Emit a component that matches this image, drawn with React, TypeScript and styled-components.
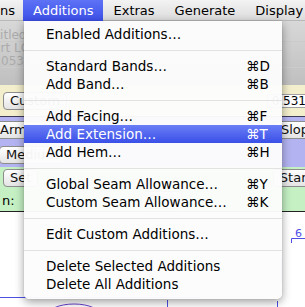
import styled, { createGlobalStyle } from 'styled-components';

type MenuEntry = { label: string; key?: string; active?: boolean } | 'sep';

const MENU_ITEMS: MenuEntry[] = [
  { label: 'Enabled Additions…' },
  'sep',
  { label: 'Standard Bands…', key: '⌘D' },
  { label: 'Add Band…', key: '⌘B' },
  'sep',
  { label: 'Add Facing…', key: '⌘F' },
  { label: 'Add Extension…', key: '⌘T', active: true },
  { label: 'Add Hem…', key: '⌘H' },
  'sep',
  { label: 'Global Seam Allowance…', key: '⌘Y' },
  { label: 'Custom Seam Allowance…', key: '⌘K' },
  'sep',
  { label: 'Edit Custom Additions…' },
  'sep',
  { label: 'Delete Selected Additions' },
  { label: 'Delete All Additions' },
];

const BAR_ITEMS = ['Additions', 'Extras', 'Generate', 'Display'];

const GlobalStyle = createGlobalStyle`
  html, body {
    margin: 0;
    padding: 0;
    background: #ffffff;
  }
  body {
    font-family: "DejaVu Sans", "Liberation Sans", sans-serif;
  }
`;

const Screen = styled.div`
  position: relative;
  width: 305px;
  height: 307px;
  overflow: hidden;
  display: flex;
  flex-direction: column;
`;

const MenuBar = styled.div`
  display: flex;
  height: 21px;
  flex-shrink: 0;
  background: linear-gradient(#f3f3f3, #dcdcdc);
  border-bottom: 1px solid #b8b8b8;
  box-sizing: border-box;
  white-space: nowrap;
`;

const BarItem = styled.div<{ $open?: boolean; $lead?: boolean }>`
  display: flex;
  align-items: center;
  padding: ${({ $lead }) => ($lead ? '0 8px 0 0' : '0 10px')};
  height: 21px;
  font-size: 13px;
  color: ${({ $open }) => ($open ? '#ffffff' : '#000000')};
  background: ${({ $open }) =>
    $open ? 'linear-gradient(#5d72f5, #3c50e9)' : 'transparent'};
`;

const Window = styled.div`
  flex: 1;
  display: flex;
  flex-direction: column;
  font-size: 13px;
`;

const Toolbar = styled.div`
  height: 64px;
  display: flex;
  flex-direction: column;
  padding-top: 8px;
  box-sizing: border-box;
  background: linear-gradient(#d8d8d8, #bfbfbf);
`;

const ToolRow = styled.div<{ $shift: number }>`
  height: 12px;
  line-height: 12px;
  font-size: 12px;
  color: #ababab;
  border-bottom: 1px solid #cbcbcb;
  margin-left: ${({ $shift }) => $shift}px;
  white-space: nowrap;
`;

const Band = styled.div<{ $tone: string; $height: number }>`
  height: ${({ $height }) => $height}px;
  background: ${({ $tone }) => $tone};
  display: flex;
  flex-direction: column;
  justify-content: space-around;
  box-sizing: border-box;
`;

const BandRow = styled.div`
  display: flex;
  justify-content: space-between;
  align-items: center;
`;

const Rule = styled.div<{ $color: string }>`
  height: 1px;
  background: ${({ $color }) => $color};
`;

const Button = styled.div<{ $shift?: number; $trail?: number }>`
  height: 16px;
  line-height: 16px;
  padding: 0 6px;
  margin-left: ${({ $shift }) => $shift ?? 0}px;
  margin-right: ${({ $trail }) => $trail ?? 0}px;
  border: 1px solid #8d8d8d;
  border-radius: 4px;
  background: linear-gradient(#ffffff, #e4e4e4);
  color: #111111;
  white-space: nowrap;
`;

const Field = styled.div`
  height: 12px;
  line-height: 12px;
  padding: 0 4px;
  border: 1px solid #a0a0a0;
  background: #ffffff;
  font-size: 12px;
  margin-right: -6px;
`;

const Label = styled.span`
  margin-left: 2px;
  margin-right: 4px;
`;

const Canvas = styled.div`
  flex: 1;
  background: #ffffff;
  border-top: 1px solid #222222;
`;

const Dropdown = styled.div`
  position: absolute;
  top: 21px;
  left: 24px;
  width: 258px;
  padding: 4px 0 6px;
  box-sizing: border-box;
  background: rgba(252, 252, 252, 0.97);
  border-radius: 0 0 5px 5px;
  box-shadow: 0 3px 10px rgba(0, 0, 0, 0.38), 0 0 1px rgba(0, 0, 0, 0.3);
`;

const Item = styled.div<{ $active?: boolean }>`
  display: flex;
  height: 18px;
  line-height: 18px;
  padding-left: 22px;
  font-size: 13.5px;
  white-space: nowrap;
  color: ${({ $active }) => ($active ? '#ffffff' : '#000000')};
  background: ${({ $active }) =>
    $active ? 'linear-gradient(#6a7ef6, #3a4fe7)' : 'transparent'};
`;

const ItemLabel = styled.span`
  flex: 1;
`;

const Shortcut = styled.span`
  width: 36px;
`;

const Separator = styled.div`
  height: 14px;
  display: flex;
  align-items: center;

  &::after {
    content: '';
    flex: 1;
    height: 1px;
    background: #e2e2e2;
  }
`;

const App = () => {
  return (
    <Screen>
      <GlobalStyle />
      <MenuBar>
        <BarItem $lead>ns</BarItem>
        {BAR_ITEMS.map((name, index) => (
          <BarItem key={name} $open={index === 0}>
            {name}
          </BarItem>
        ))}
      </MenuBar>

      <Window>
        <Toolbar>
          <ToolRow $shift={-21}>Untitled</ToolRow>
          <ToolRow $shift={-18}>Shirt LC</ToolRow>
          <ToolRow $shift={1}>0531</ToolRow>
        </Toolbar>
        <Band $tone="#f3eecb" $height={31}>
          <BandRow>
            <Button $shift={3}>Custom</Button>
            <Field>0.531</Field>
          </BandRow>
        </Band>
        <Rule $color="#3a3a5a" />
        <Band $tone="#b3b3f1" $height={50}>
          <BandRow>
            <Button $shift={-7}>Armhole</Button>
            <Button $trail={-19}>Slope</Button>
          </BandRow>
          <BandRow>
            <Button $shift={-1}>Medium</Button>
          </BandRow>
        </Band>
        <Band $tone="#c4f0c4" $height={44}>
          <BandRow>
            <Button $shift={3}>Set</Button>
            <Button $trail={-41}>Standard</Button>
          </BandRow>
          <BandRow>
            <Label>n:</Label>
            <Button>Size</Button>
            <span />
          </BandRow>
        </Band>
        <Canvas>
          <svg width="305" height="96" viewBox="0 0 305 96">
            <g fill="none" stroke="#4f4fe6" strokeWidth="1">
              <line x1="0" y1="85.5" x2="200" y2="85.5" />
              <line x1="291.5" y1="26.5" x2="305" y2="26.5" />
              <line x1="291.5" y1="26.5" x2="291.5" y2="31" />
              <line x1="281.5" y1="46" x2="281.5" y2="70" />
              <line x1="167.5" y1="88" x2="167.5" y2="96" />
              <line x1="277.5" y1="89" x2="277.5" y2="96" />
              <ellipse cx="74" cy="104" rx="27" ry="12" stroke="#6a3fd0" />
            </g>
            <text x="295" y="25" fontSize="11" fill="#4f4fe6" fontFamily="DejaVu Sans">
              6
            </text>
          </svg>
        </Canvas>
      </Window>

      <Dropdown>
        {MENU_ITEMS.map((entry, index) =>
          entry === 'sep' ? (
            <Separator key={index} />
          ) : (
            <Item key={index} $active={entry.active}>
              <ItemLabel>{entry.label}</ItemLabel>
              {entry.key && <Shortcut>{entry.key}</Shortcut>}
            </Item>
          ),
        )}
      </Dropdown>
    </Screen>
  );
};

export default App;
